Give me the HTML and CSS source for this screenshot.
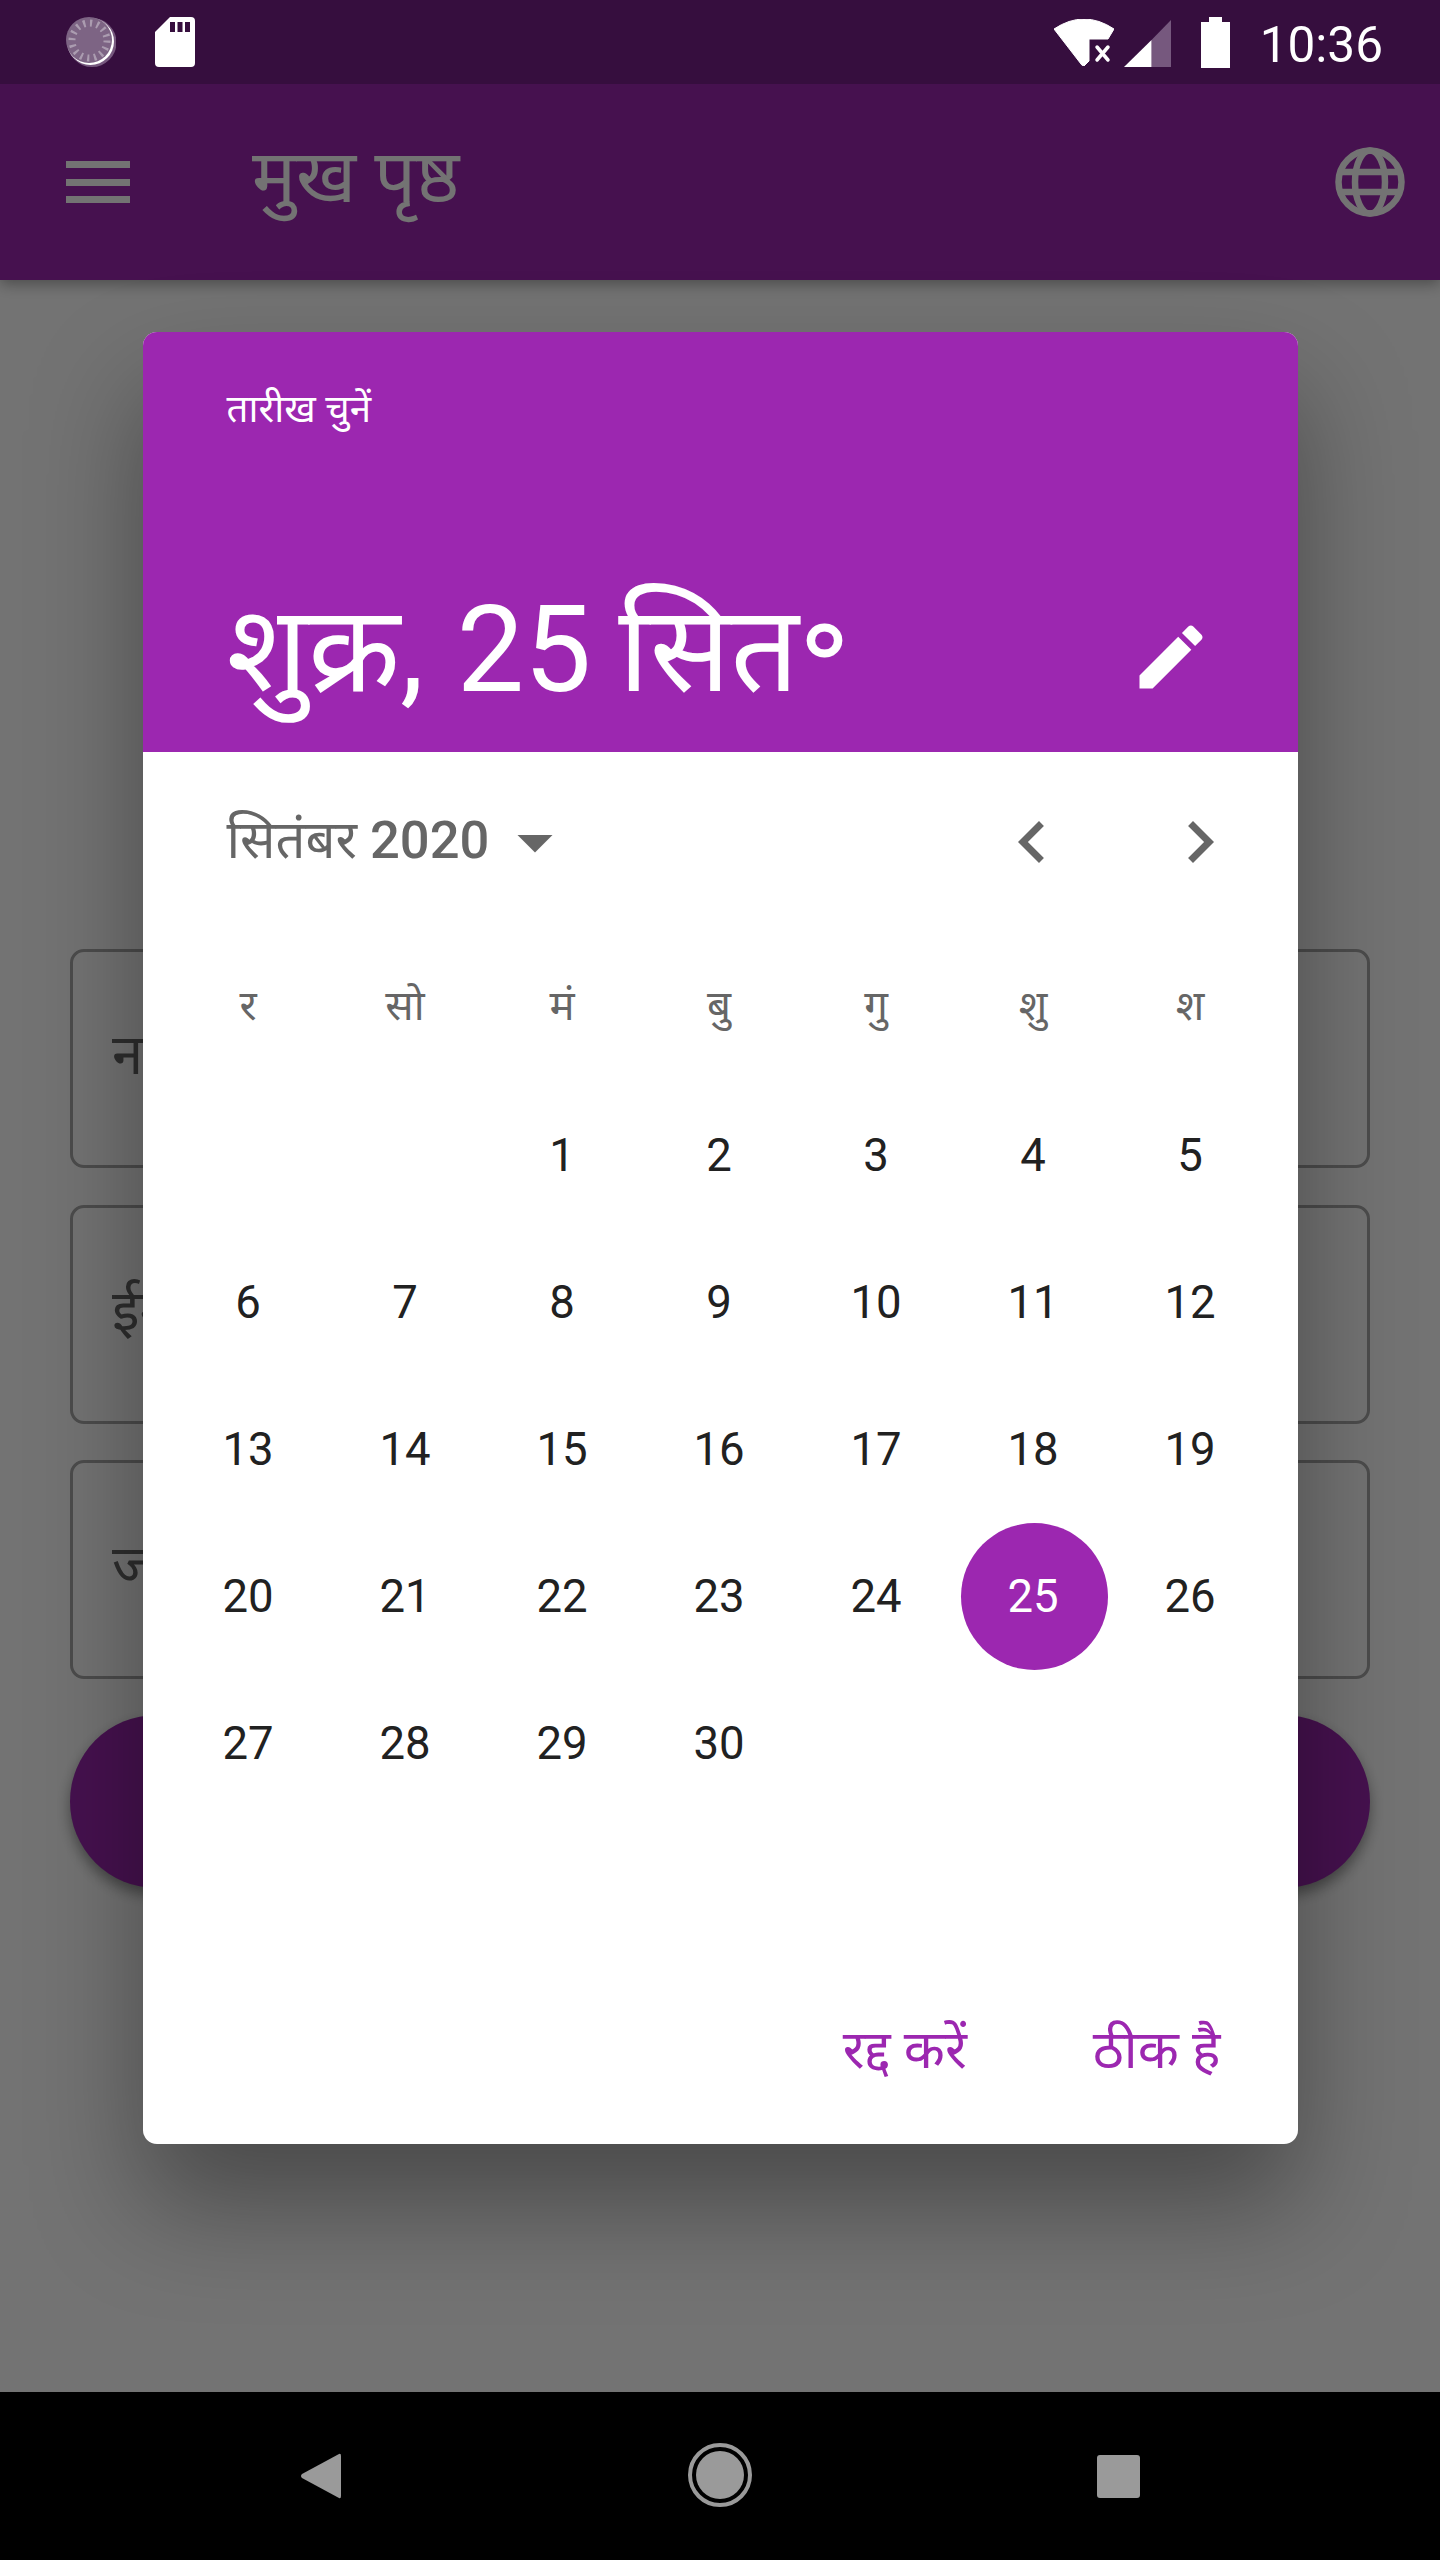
FILE: index.html
```html
<!DOCTYPE html>
<html lang="hi">
<head>
  <meta charset="UTF-8">
  <title>मुख पृष्ठ</title>
  <link rel="stylesheet" href="styles.css">
</head>
<body>
  <div class="statusbar">
    <div class="status-left">
      <svg class="ic-spinner" width="50" height="50" viewBox="0 0 50 50">
        <circle cx="26" cy="25.500" r="24.500" fill="#76587e"/>
        <circle cx="24.500" cy="24.500" r="23.500" fill="#fff"/>
        <circle cx="23" cy="23" r="23" fill="#7d6484"/>
        <circle cx="23.500" cy="23.500" r="17.500" fill="none" stroke="#ab9cb0" stroke-width="7" stroke-dasharray="2.200 4.670"/>
      </svg>
      <svg class="ic-sd" width="40" height="50" viewBox="0 0 40 50">
        <path d="M15 0H36a4 4 0 0 1 4 4V46a4 4 0 0 1-4 4H4a4 4 0 0 1-4-4V15z" fill="#fff"/>
        <path d="M15 5h5v10h-5zM22.500 5h5v10h-5zM30 5h5v10h-5z" fill="#360e3e"/>
      </svg>
    </div>
    <div class="status-right">
      <svg class="ic-wifi" width="60" height="47" viewBox="0 0 60 47">
        <path d="M0 10Q30 -10 60 10L54 20H35V42L30 47Q28 47 27 45z" fill="#fff" stroke="#fff" stroke-width="1" stroke-linejoin="round"/>
        <path d="M43 28L54 41M54 28L43 41" stroke="#fff" stroke-width="3.500" stroke-linecap="round"/>
      </svg>
      <svg class="ic-signal" width="47" height="47" viewBox="0 0 47 47">
        <path d="M47 0V47H27.500V20z" fill="#76587e"/>
        <path d="M27.500 20V47H0z" fill="#fff"/>
      </svg>
      <svg class="ic-battery" width="29" height="51" viewBox="0 0 29 51">
        <path d="M8 0H21V5H29V51H0V5H8z" fill="#fff"/>
      </svg>
      <span class="clock">10:36</span>
    </div>
  </div>

  <header class="appbar">
    <div class="menu"><span></span><span></span><span></span></div>
    <h1 class="apptitle">मुख पृष्ठ</h1>
    <svg class="ic-globe" width="70" height="70" viewBox="0 0 70 70" fill="none" stroke="#fff" stroke-width="6.500">
      <circle cx="35" cy="35" r="31.500"/>
      <ellipse cx="35" cy="35" rx="15" ry="31.500"/>
      <path d="M3 25H67M3 45H67"/>
    </svg>
  </header>

  <main class="form">
    <div class="field">नाम</div>
    <div class="field">ईमेल</div>
    <div class="field">जन्मतिथि</div>
    <button class="submit">जमा करें</button>
  </main>

  <nav class="navbar">
    <svg width="40" height="46" viewBox="0 0 40 46"><path d="M38 1Q40 0 40 3V43Q40 46 38 45L1 25Q-1 23 1 21z" fill="#9a9a9a"/></svg>
    <svg width="64" height="64" viewBox="0 0 64 64"><circle cx="32" cy="32" r="30" fill="none" stroke="#9a9a9a" stroke-width="4"/><circle cx="32" cy="32" r="24" fill="#9a9a9a"/></svg>
    <svg width="43" height="43" viewBox="0 0 43 43"><rect width="43" height="43" rx="3" fill="#9a9a9a"/></svg>
  </nav>

  <div class="scrim">
    <div class="dialog">
      <div class="dlg-head">
        <div class="dlg-label">तारीख चुनें</div>
        <div class="dlg-date">
          <span>शुक्र, <span class="dlg-num">25</span> सित॰</span>
          <svg width="84" height="84" viewBox="0 0 24 24"><path fill="#fff" d="M3 17.250V21h3.750L17.810 9.940l-3.750-3.750L3 17.250zM20.710 7.040c.39-.39.39-1.020 0-1.410l-2.340-2.340c-.39-.39-1.020-.39-1.410 0l-1.830 1.830 3.750 3.750 1.830-1.830z"/></svg>
        </div>
      </div>
      <div class="cal">
        <div class="cal-head">
          <span class="cal-month"><span class="cal-name">सितंबर</span> 2020</span>
          <svg class="cal-drop" width="84" height="84" viewBox="0 0 24 24"><path fill="#666" d="M7 10l5 5 5-5z"/></svg>
          <svg class="cal-prev" width="84" height="84" viewBox="0 0 24 24"><path fill="#666" d="M15.410 7.410L14 6l-6 6 6 6 1.410-1.410L10.830 12z"/></svg>
          <svg class="cal-next" width="84" height="84" viewBox="0 0 24 24"><path fill="#666" d="M10 6L8.590 7.410 13.170 12l-4.580 4.590L10 18l6-6z"/></svg>
        </div>
        <div class="weekdays">
          <span>र</span><span>सो</span><span>मं</span><span>बु</span><span>गु</span><span>शु</span><span>श</span>
        </div>
        <div class="days">
          <span></span><span></span><span>1</span><span>2</span><span>3</span><span>4</span><span>5</span>
          <span>6</span><span>7</span><span>8</span><span>9</span><span>10</span><span>11</span><span>12</span>
          <span>13</span><span>14</span><span>15</span><span>16</span><span>17</span><span>18</span><span>19</span>
          <span>20</span><span>21</span><span>22</span><span>23</span><span>24</span><span class="sel">25</span><span>26</span>
          <span>27</span><span>28</span><span>29</span><span>30</span>
        </div>
      </div>
      <div class="dlg-actions">
        <span>रद्द करें</span>
        <span>ठीक है</span>
      </div>
    </div>
  </div>
</body>
</html>
```

FILE: styles.css
```css
* { box-sizing: border-box; }
html, body { margin: 0; height: 2560px; }
body {
  background: #fff;
  color: #000;
  display: flex;
  flex-direction: column;
  font-family: Roboto, "Noto Sans", sans-serif;
  position: relative;
  overflow: hidden;
}

.statusbar {
  align-items: center;
  background: #360e3e;
  display: flex;
  flex: none;
  height: 84px;
  justify-content: space-between;
  padding: 0 57px 0 66px;
  position: relative;
  z-index: 2;
}
.status-left { display: flex; gap: 39px; }
.status-right { align-items: center; display: flex; }
.ic-wifi { margin-right: 10px; }
.ic-signal { margin: 3px 30px 0 0; }
.ic-battery { margin: 0 30px 0 0; }
.clock { color: #fff; font-size: 49.500px; line-height: 84px; margin-top: 5px; }

.appbar {
  align-items: center;
  background: #9c27b0;
  box-shadow: 0 4px 14px rgba(0, 0, 0, 0.35);
  color: #fff;
  display: flex;
  flex: none;
  height: 196px;
  padding: 0 35px 0 66px;
  position: relative;
}
.menu { display: flex; flex-direction: column; gap: 10.500px; width: 64px; }
.menu span { background: #fff; display: block; height: 7px; }
.apptitle {
  flex: 1;
  font-size: 73.500px;
  font-weight: 400;
  margin: 0 0 18px 122px;
}

.form {
  display: flex;
  flex: 1;
  flex-direction: column;
  padding: 669px 70px 0 70px;
}
.field {
  border: 3.500px solid #a8a8a8;
  border-radius: 14px;
  color: #666;
  font-size: 56px;
  height: 219px;
  line-height: 206px;
  margin-bottom: 36.500px;
  padding-left: 39px;
}
.submit {
  background: #9c27b0;
  border: none;
  border-radius: 87px;
  box-shadow: 0 7px 14px rgba(0, 0, 0, 0.4);
  color: #fff;
  font: 500 56px Roboto, "Noto Sans", sans-serif;
  height: 173px;
  margin-top: -1px;
}

.navbar {
  align-items: center;
  background: #000;
  display: flex;
  flex: none;
  height: 168px;
  position: relative;
  z-index: 2;
}
.navbar svg { position: absolute; }
.navbar svg:nth-child(1) { left: 301px; top: 61px; }
.navbar svg:nth-child(2) { left: 688px; top: 51px; }
.navbar svg:nth-child(3) { left: 1097px; top: 63px; }

.scrim {
  align-items: center;
  background: rgba(0, 0, 0, 0.55);
  bottom: 0;
  display: flex;
  justify-content: center;
  left: 0;
  padding: 84px 0 168px;
  position: absolute;
  right: 0;
  top: 0;
}

.dialog {
  background: #fff;
  border-radius: 14px;
  box-shadow: 0 60px 110px 0 rgba(0, 0, 0, 0.36);
  display: flex;
  flex-direction: column;
  height: 1812px;
  overflow: hidden;
  width: 1155px;
}

.dlg-head {
  background: #9c27b0;
  color: #fff;
  flex: none;
  height: 420px;
  padding: 49px 85px 0 84px;
}
.dlg-label { font-size: 38.500px; line-height: 56px; }
.dlg-date {
  align-items: center;
  display: flex;
  font-size: 120px;
  height: 168px;
  justify-content: space-between;
  line-height: 168px;
  margin-top: 129px;
}
.dlg-date svg { margin-top: 13px; }
.dlg-num { margin: 0 -3px 0 3px; }

.cal { flex: 1; padding: 0 28px 0 27px; }
.cal-head { align-items: center; display: flex; height: 180px; padding: 0 0 10px 57px; position: relative; }
.cal-month { color: #666; font-size: 52.500px; font-weight: 500; }
.cal-name { font-weight: 400; }
.cal-drop { margin: 9px 0 0 4px; }
.cal-prev { position: absolute; left: 820px; top: 48px; }
.cal-next { position: absolute; left: 988px; top: 48px; }

.weekdays, .days { display: grid; grid-template-columns: repeat(7, 157px); }
.weekdays { justify-items: center; margin-bottom: 3px; }
.weekdays span { color: #666; font-size: 42px; line-height: 147px; }
.days span { color: #212121; font-size: 45.500px; height: 147px; line-height: 147px; text-align: center; }
.days .sel { color: #fff; position: relative; z-index: 0; }
.days .sel::before {
  background: #9c27b0;
  border-radius: 50%;
  content: "";
  height: 147px;
  left: 6px;
  position: absolute;
  top: 0;
  width: 147px;
  z-index: -1;
}

.dlg-actions {
  align-items: center;
  color: #9c27b0;
  display: flex;
  flex: none;
  font-size: 53.500px;
  gap: 126px;
  height: 188px;
  justify-content: flex-end;
  padding: 0 77px 6px 0;
}
```
